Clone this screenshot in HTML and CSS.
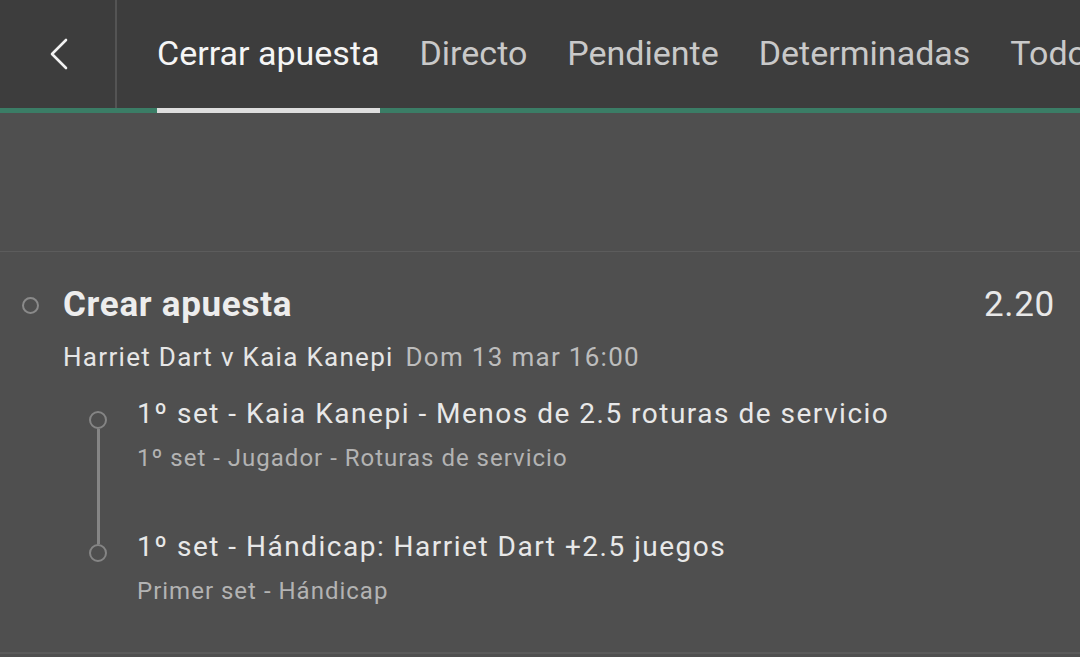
FILE: index.html
```html
<!DOCTYPE html>
<html lang="es">
<head>
    <meta charset="UTF-8">
    <meta name="viewport" content="width=device-width, initial-scale=1.0">
    <title>Mis apuestas</title>
    <link rel="stylesheet" href="styles.css">
</head>
<body>

    <!-- Cabecera con pestañas -->
    <div class="header">
        <div class="back">
            <svg width="20" height="32" viewBox="0 0 20 32">
                <polyline points="17,2 3,16 17,30" fill="none" stroke="#f2f2f2" stroke-width="2.6" stroke-linecap="round" stroke-linejoin="round"/>
            </svg>
        </div>
        <div class="tabs">
            <a href="#" class="tab active">Cerrar apuesta</a>
            <a href="#" class="tab">Directo</a>
            <a href="#" class="tab">Pendiente</a>
            <a href="#" class="tab">Determinadas</a>
            <a href="#" class="tab">Todo</a>
        </div>
    </div>

    <!-- Zona vacía (cargando) -->
    <div class="placeholder"></div>

    <!-- Apuesta -->
    <div class="bet">
        <div class="bet-head">
            <span class="dot"></span>
            <span class="bet-title">Crear apuesta</span>
            <span class="odds">2.20</span>
        </div>
        <div class="bet-event">
            Harriet Dart v Kaia Kanepi <span class="date">Dom 13 mar 16:00</span>
        </div>

        <div class="legs">
            <div class="leg">
                <div class="marker"></div>
                <div class="leg-text">
                    <div class="leg-title">1º set - Kaia Kanepi - Menos de 2.5 roturas de servicio</div>
                    <div class="leg-sub">1º set - Jugador - Roturas de servicio</div>
                </div>
            </div>
            <div class="leg">
                <div class="marker"></div>
                <div class="leg-text">
                    <div class="leg-title">1º set - Hándicap: Harriet Dart +2.5 juegos</div>
                    <div class="leg-sub">Primer set - Hándicap</div>
                </div>
            </div>
        </div>
    </div>

</body>
</html>
```

FILE: styles.css
```css
body {
    font-family: Roboto, "Liberation Sans", sans-serif;
    background-color: #4f4f4f;
    color: #e8e8e8;
    margin: 0;
    overflow: hidden;
}

/* Cabecera */
.header {
    display: flex;
    height: 108px;
    background-color: #3d3d3d;
    border-bottom: 5px solid #3b7d66;
}

.back {
    width: 117px;
    border-right: 2px solid #545454;
    display: flex;
    align-items: center;
    justify-content: center;
    padding-left: 2px;
    box-sizing: border-box;
    flex-shrink: 0;
}

.tabs {
    display: flex;
    gap: 40px;
    padding-left: 40px;
    white-space: nowrap;
}

.tab {
    display: flex;
    align-items: center;
    padding-bottom: 3px;
    margin-bottom: -5px;
    border-bottom: 5px solid transparent;
    font-size: 34px;
    color: #c9c9c9;
    text-decoration: none;
}

.tab.active {
    color: #f5f5f5;
    border-bottom-color: #dedede;
}

/* Zona vacía */
.placeholder {
    height: 138px;
    border-bottom: 1px solid #5c5c5c;
}

/* Apuesta */
.bet {
    padding: 33px 25px 0 22px;
    height: 367px;
    border-bottom: 2px solid #5a5a5a;
}

.bet-head {
    display: flex;
    align-items: center;
    line-height: 40px;
}

.dot {
    width: 13px;
    height: 13px;
    border: 2px solid #8a8a8a;
    border-radius: 50%;
    margin-right: 24px;
}

.bet-title {
    font-size: 35px;
    font-weight: bold;
    letter-spacing: 0.7px;
    color: #ededed;
    flex: 1;
}

.odds {
    font-size: 35px;
    letter-spacing: 0.7px;
    color: #e8e8e8;
}

.bet-event {
    margin-top: 17px;
    padding-left: 41px;
    font-size: 26px;
    letter-spacing: 1.3px;
    line-height: 30px;
    color: #e6e6e6;
}

.date {
    margin-left: 4px;
    color: #bdbdbd;
}

/* Selecciones */
.legs {
    margin-top: 26px;
    padding-left: 67px;
}

.leg {
    display: flex;
    gap: 30px;
    padding-bottom: 59px;
    position: relative;
}

.leg:last-child {
    padding-bottom: 0;
}

.marker {
    width: 14px;
    height: 14px;
    margin-top: 13px;
    border: 2px solid #858585;
    border-radius: 50%;
    flex-shrink: 0;
}

.leg:not(:last-child) .marker::after {
    content: "";
    position: absolute;
    left: 8px;
    top: 31px;
    bottom: -13px;
    width: 3px;
    background-color: #858585;
}

.leg-title {
    font-size: 28px;
    letter-spacing: 1.5px;
    line-height: 32px;
    color: #e8e8e8;
}

.leg-sub {
    margin-top: 14px;
    font-size: 24px;
    letter-spacing: 1px;
    line-height: 28px;
    color: #b3b3b3;
}
```
